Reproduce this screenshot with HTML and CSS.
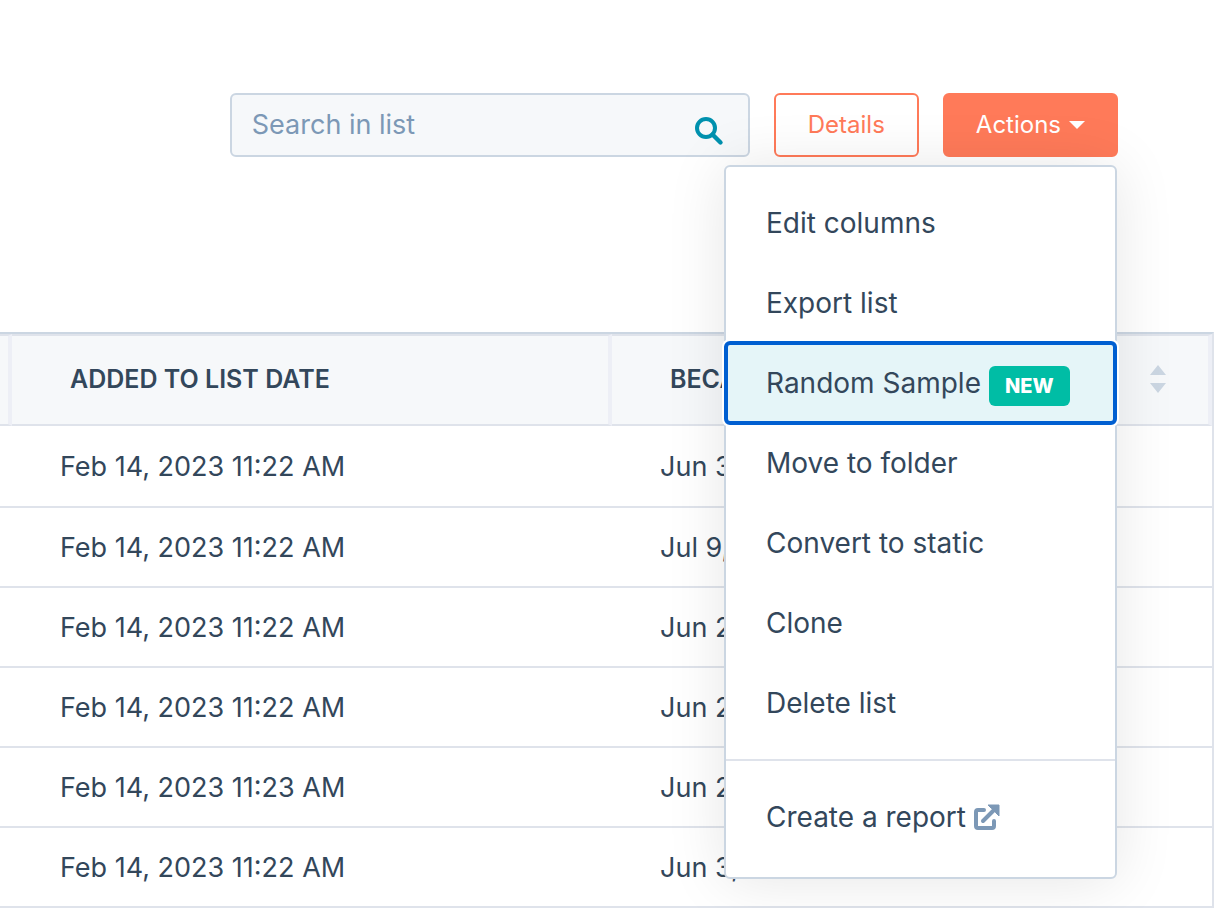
FILE: index.html
```
<!DOCTYPE html>
<html lang="en">
<head>
    <meta charset="UTF-8">
    <meta name="viewport" content="width=device-width, initial-scale=1.0">
    <title>List members</title>
    <link rel="stylesheet" href="styles.css">
</head>
<body>
    <header class="toolbar">
        <form class="search" role="search">
            <input class="search-input" type="search" placeholder="Search in list" aria-label="Search in list">
            <button class="search-btn" type="button" aria-label="Search">
                <svg width="30" height="30" viewBox="0 0 30 30" fill="none" stroke="#0091ae">
                    <circle cx="12" cy="12" r="9" stroke-width="4"/>
                    <path d="M18.5 18.5L26.5 26.5" stroke-width="4.4" stroke-linecap="round"/>
                </svg>
            </button>
        </form>
        <button class="btn" type="button">Details</button>
        <div class="dropdown">
            <button class="btn primary" type="button" aria-haspopup="menu" aria-expanded="true">
                Actions
                <svg width="16" height="8" viewBox="0 0 16 8"><path d="M0 0H16L8 8Z" fill="#fff"/></svg>
            </button>
            <div class="menu">
                <div class="menu-group">
                    <button class="menu-item" type="button">Edit columns</button>
                    <button class="menu-item" type="button">Export list</button>
                    <button class="menu-item focused" type="button">Random Sample <span class="badge">NEW</span></button>
                    <button class="menu-item" type="button">Move to folder</button>
                    <button class="menu-item" type="button">Convert to static</button>
                    <button class="menu-item" type="button">Clone</button>
                    <button class="menu-item" type="button">Delete list</button>
                </div>
                <div class="menu-group">
                    <a class="menu-item" href="#">Create a report
                        <svg width="26" height="26" viewBox="0 0 26 26" fill="none" stroke="#7c98b6" stroke-width="4" stroke-linejoin="round">
                            <path d="M10 6H4Q2 6 2 8V22Q2 24 4 24H18Q20 24 20 22V17" stroke-linecap="round"/>
                            <path d="M9 17L21 5" stroke-linecap="round"/>
                            <path d="M14 1H25V12L21.5 8.5L17.5 4.5Z" fill="#7c98b6" stroke-width="1"/>
                        </svg>
                    </a>
                </div>
            </div>
        </div>
    </header>

    <table class="list">
        <thead>
            <tr>
                <th class="edge"></th>
                <th>Added to list date</th>
                <th>
                    <div class="th-inner">
                        Became
                        <svg width="16" height="28" viewBox="0 0 16 28" fill="#cbd6e2"><path d="M0 10L8 0L16 10ZM0 18L8 28L16 18Z"/></svg>
                    </div>
                </th>
            </tr>
        </thead>
        <tbody>
            <tr><td class="edge"></td><td>Feb 14, 2023 11:22 AM</td><td>Jun 3,</td></tr>
            <tr><td class="edge"></td><td>Feb 14, 2023 11:22 AM</td><td>Jul 9,</td></tr>
            <tr><td class="edge"></td><td>Feb 14, 2023 11:22 AM</td><td>Jun 2,</td></tr>
            <tr><td class="edge"></td><td>Feb 14, 2023 11:22 AM</td><td>Jun 2,</td></tr>
            <tr><td class="edge"></td><td>Feb 14, 2023 11:23 AM</td><td>Jun 2,</td></tr>
            <tr><td class="edge"></td><td>Feb 14, 2023 11:22 AM</td><td>Jun 3,</td></tr>
        </tbody>
    </table>
</body>
</html>
```
FILE: styles.css
```
* {
    box-sizing: border-box;
}
body {
    margin: 0;
    background: #fff;
    color: #33475b;
    font-family: Inter, "Liberation Sans", sans-serif;
    font-size: 28px;
    font-weight: 400;
    line-height: 40px;
}
button,
input {
    font: inherit;
    color: inherit;
}
.toolbar {
    display: flex;
    justify-content: flex-end;
    gap: 24px;
    padding: 93px 96px 175px;
}
.search {
    display: flex;
    align-items: center;
    width: 520px;
    height: 64px;
    padding: 0 24px 0 20px;
    background: #f6f8fa;
    border: 2px solid #cbd6e2;
    border-radius: 6px;
}
.search-input {
    flex: 1;
    min-width: 0;
    padding: 0;
    border: none;
    outline: none;
    background: none;
    font-size: 27px;
}
.search-input::placeholder {
    color: #7c98b6;
    opacity: 1;
}
.search-btn {
    display: flex;
    padding: 12px 0 0;
    border: none;
    background: none;
    cursor: pointer;
}
.btn {
    display: flex;
    align-items: center;
    gap: 8px;
    height: 64px;
    padding: 0 32px;
    font-size: 24px;
    color: #ff7a59;
    background: #fff;
    border: 2px solid #ff7a59;
    border-radius: 6px;
    cursor: pointer;
}
.btn.primary {
    padding: 0 31px;
    color: #fff;
    background: #ff7a59;
}
.dropdown {
    position: relative;
}
.menu {
    position: absolute;
    top: 72px;
    right: 1px;
    width: 393px;
    background: #fff;
    border: 2px solid #cbd6e2;
    border-radius: 6px;
    box-shadow: 0 2px 60px rgba(0, 0, 0, 0.1);
}
.menu-group {
    padding: 16px 0;
}
.menu-group + .menu-group {
    padding-bottom: 20px;
    border-top: 2px solid #dfe3eb;
}
.menu-item {
    display: flex;
    align-items: center;
    gap: 8px;
    width: 100%;
    height: 80px;
    padding: 0 40px;
    color: #33475b;
    background: none;
    border: none;
    text-decoration: none;
    white-space: nowrap;
    cursor: pointer;
}
.menu-item.focused {
    background: #e5f5f8;
    border-radius: 4px;
    outline: 4px solid #005fd1;
    outline-offset: -2px;
    box-shadow: 0 0 0 4px #fff;
}
.badge {
    margin-top: 6px;
    padding: 0 16px;
    color: #fff;
    background: #00bda5;
    border-radius: 6px;
    font-size: 20px;
    font-weight: 800;
}
.list {
    width: 100%;
    table-layout: fixed;
    border-collapse: separate;
    border-spacing: 0;
    border-top: 2px solid #cbd6e2;
    border-right: 2px solid #dfe3eb;
}
.list th {
    height: 92px;
    padding: 0 42px 2px 58px;
    background: #f6f8fa;
    border-top: 2px solid #dfe3eb;
    border-bottom: 2px solid #dfe3eb;
    border-right: 4px solid #edeff6;
    font-size: 25px;
    font-weight: 600;
    text-align: left;
    text-transform: uppercase;
}
.list td {
    height: 80px;
    padding: 2px 48px 0;
    border-bottom: 2px solid #dfe3eb;
    font-size: 27px;
}
.list tbody tr:first-child td {
    height: 82px;
}
.list .edge {
    width: 12px;
    padding: 0;
}
.th-inner {
    display: flex;
    align-items: center;
    justify-content: space-between;
}
```
